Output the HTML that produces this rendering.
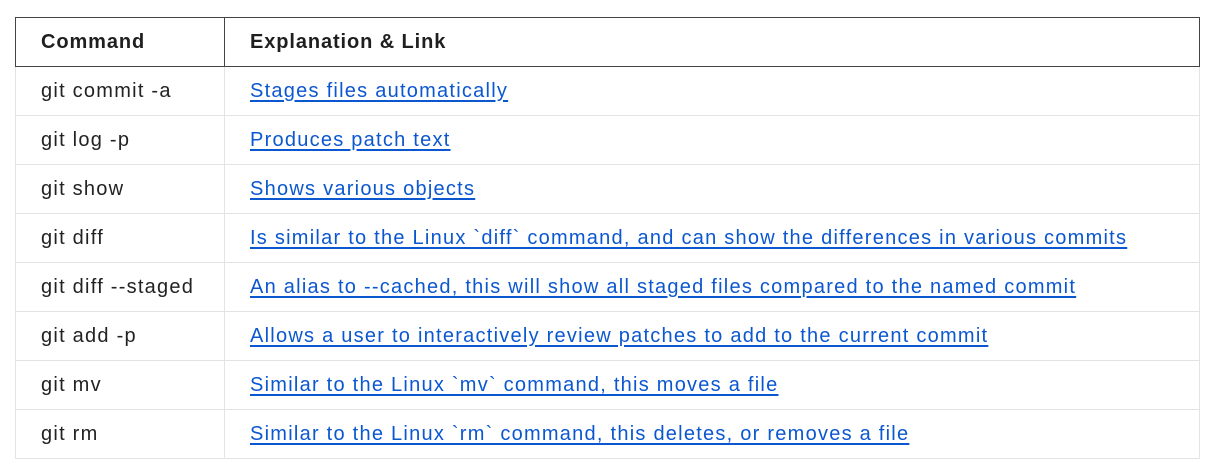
<!DOCTYPE html>
<html><head><style>
body{margin:0;background:#fff;font-family:"Liberation Sans",sans-serif;}
table{position:absolute;left:15px;top:17px;width:1185px;border-collapse:collapse;font-size:20px;letter-spacing:1.25px;color:#222;}
td,th{height:49px;padding:0 0 0 25px;text-align:left;border:1px solid #e3e3e3;box-sizing:border-box;}
th{border:1px solid #444;font-weight:bold;height:49px;color:#1f1f1f;letter-spacing:0.9px;}
td:first-child,th:first-child{width:209px;}
a{color:#0b57d0;text-decoration:underline;text-underline-offset:3px;}
</style></head><body>
<table>
<tr><th>Command</th><th>Explanation &amp; Link</th></tr>
<tr><td>git commit -a</td><td><a>Stages files automatically</a></td></tr>
<tr><td>git log -p</td><td><a>Produces patch text</a></td></tr>
<tr><td>git show</td><td><a>Shows various objects</a></td></tr>
<tr><td>git diff</td><td><a>Is similar to the Linux `diff` command, and can show the differences in various commits</a></td></tr>
<tr><td>git diff --staged</td><td><a>An alias to --cached, this will show all staged files compared to the named commit</a></td></tr>
<tr><td>git add -p</td><td><a>Allows a user to interactively review patches to add to the current commit</a></td></tr>
<tr><td>git mv</td><td><a>Similar to the Linux `mv` command, this moves a file</a></td></tr>
<tr><td>git rm</td><td><a>Similar to the Linux `rm` command, this deletes, or removes a file</a></td></tr>
</table>
</body></html>
